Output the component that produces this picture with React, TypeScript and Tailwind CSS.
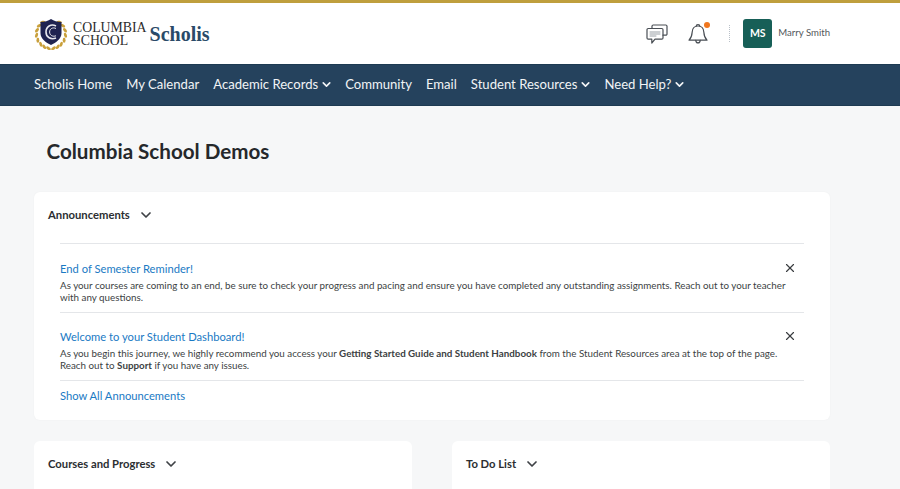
import { ChevronDown, X } from "lucide-react";

const navItems = [
  { label: "Scholis Home" },
  { label: "My Calendar" },
  { label: "Academic Records", menu: true },
  { label: "Community" },
  { label: "Email" },
  { label: "Student Resources", menu: true },
  { label: "Need Help?", menu: true },
];

function Crest() {
  // laurel leaves run round the shield, from the top corners down to the base
  const angles = [35, 55, 75, 95, 115, 135, 152, 170];
  return (
    <svg width="34" height="32" viewBox="0 0 34 32" className="shrink-0">
      {angles.map((t) => {
        const r = (t * Math.PI) / 180;
        const x = 17 - Math.sin(r) * 14.5;
        const y = 16 - Math.cos(r) * 14.5;
        return (
          <g key={t} fill="#c9a03c">
            <ellipse cx={x} cy={y} rx="2.6" ry="1.4" transform={`rotate(${-t + 25} ${x} ${y})`} />
            <ellipse cx={34 - x} cy={y} rx="2.6" ry="1.4" transform={`rotate(${t - 25} ${34 - x} ${y})`} />
          </g>
        );
      })}
      <path d="M6.5 4 C11 4 14 3 17 1 C20 3 23 4 27.5 4 L27.5 15 C27.5 21 22 24.5 17 27 C12 24.5 6.5 21 6.5 15 Z" fill="#1f2350" />
      <path d="M22 8 C17 5.5 12 8.5 12 14 C12 19.5 17 22 22 20" fill="none" stroke="#e8e8ee" strokeWidth="1.6" />
      <path d="M22 10.5 C19 9 15.6 10.5 15.6 14 C15.6 17.5 19 19 22 17.8" fill="none" stroke="#e8e8ee" strokeWidth="1" />
    </svg>
  );
}

function ChatIcon() {
  return (
    <svg width="22" height="22" viewBox="0 0 22 22" fill="none" stroke="#4a4f55" strokeWidth="1.2" strokeLinejoin="round" strokeLinecap="round">
      <path d="M6 5 V3 a1.2 1.2 0 0 1 1.2 -1 H19.8 A1.2 1.2 0 0 1 21 3 V11 a1.2 1.2 0 0 1 -1.2 1.2 H17" />
      <path d="M2.2 5.5 H15.8 A1.2 1.2 0 0 1 17 6.7 V15 a1.2 1.2 0 0 1 -1.2 1.2 H9 L5.8 20 V16.2 H2.2 A1.2 1.2 0 0 1 1 15 V6.7 A1.2 1.2 0 0 1 2.2 5.5 Z" />
      <path d="M4 9 H14 M4 11 H14 M4 13 H10" stroke="#9aa0a6" strokeWidth="1" />
    </svg>
  );
}

function BellIcon() {
  return (
    <span className="relative block h-[22px] w-[20px]">
      <svg width="20" height="22" viewBox="0 0 20 22" fill="none" stroke="#4a4f55" strokeWidth="1.2" strokeLinejoin="round" strokeLinecap="round">
        <path d="M10 3 C6 3 4.4 5.8 4.2 9 C4 12.5 3.2 15 1 17.2 H19 C16.8 15 16 12.5 15.8 9 C15.6 5.8 14 3 10 3 Z" />
        <path d="M8.2 3.2 C8.2 1.2 11.8 1.2 11.8 3.2" />
        <path d="M7.8 17.4 C8 20.8 12 20.8 12.2 17.4" />
      </svg>
      <span className="absolute -top-[1px] -right-[2px] h-[6px] w-[6px] rounded-full bg-[#f0761d]" />
    </span>
  );
}

function Announcement({ title, children }: { title: string; children: React.ReactNode }) {
  return (
    <div className="relative border-b border-[#e4e6e9] pt-[16px] pb-[9px]">
      <a className="block text-[11.2px] leading-[16px] text-[#1a7ac4]">{title}</a>
      <p className="mt-[2px] pr-[10px] text-[9.8px] leading-[12px] text-[#3c3f43]">{children}</p>
      <X size={14} strokeWidth={2} className="absolute top-[16px] right-[7px] text-[#3a3d41]" />
    </div>
  );
}

function WidgetHead({ title }: { title: string }) {
  return (
    <div className="flex items-center">
      <h2 className="text-[11.25px] leading-[16px] font-bold text-[#2b2e31]">{title}</h2>
      <ChevronDown size={16} strokeWidth={2.6} className="ml-[8px] text-[#3f4246]" />
    </div>
  );
}

export default function App() {
  return (
    <div className="h-[489px] overflow-hidden bg-[#f6f7f8] font-['Lato',sans-serif]">
      <div className="h-[3px] bg-[#bf9f3d]" />
      <header className="flex h-[61px] items-center bg-white pr-[70px] pl-[34px]">
        <Crest />
        <div className="ml-[5px] font-['Liberation_Serif',serif] text-[13.8px] leading-[13px] text-[#2c2c2c]">
          <div>COLUMBIA</div>
          <div>SCHOOL</div>
        </div>
        <span className="ml-[3px] font-['Liberation_Serif',serif] text-[20px] leading-none font-bold text-[#2a4a68]">Scholis</span>
        <div className="ml-auto flex items-center">
          <ChatIcon />
          <span className="ml-[20px]"><BellIcon /></span>
          <span className="ml-[21px] h-[17px] border-l border-dotted border-[#b9c0c8]" />
          <span className="ml-[13px] flex h-[29px] w-[29px] items-center justify-center rounded-[3px] bg-[#175f57] text-[10.5px] font-bold text-white">MS</span>
          <span className="ml-[6px] text-[9.6px] text-[#53575b]">Marry Smith</span>
        </div>
      </header>
      <nav className="flex h-[42px] items-center gap-[14px] border-y border-[#1d3a52] bg-[#25425d] pb-[1px] pl-[34px] text-[13.1px] text-[#f2f4f6]">
        {navItems.map((item) => (
          <span key={item.label} className="flex items-center">
            {item.label}
            {item.menu && <ChevronDown size={13} strokeWidth={3} className="-mr-[2px] ml-[2px]" />}
          </span>
        ))}
      </nav>
      <main className="pt-[32px] pr-[70px] pl-[34px]">
        <h1 className="pl-[12.5px] text-[20.6px] leading-[26px] font-bold text-[#25282b]">Columbia School Demos</h1>
        <section className="mt-[28px] h-[228px] rounded-[6px] bg-white pt-[15px] pr-[26px] pl-[14px] shadow-[0_0_2px_rgba(0,0,0,0.04)]">
          <WidgetHead title="Announcements" />
          <div className="mt-[20px] ml-[12px] border-t border-[#e4e6e9] pt-[1px]">
            <Announcement title="End of Semester Reminder!">
              As your courses are coming to an end, be sure to check your progress and pacing and ensure you have completed any outstanding assignments. Reach out to your teacher with any questions.
            </Announcement>
            <Announcement title="Welcome to your Student Dashboard!">
              As you begin this journey, we highly recommend you access your <b>Getting Started Guide and Student Handbook</b> from the Student Resources area at the top of the page. Reach out to <b>Support</b> if you have any issues.
            </Announcement>
            <a className="mt-[7px] block text-[11.2px] leading-[15px] text-[#1a7ac4]">Show All Announcements</a>
          </div>
        </section>
        <div className="mt-[21px] grid grid-cols-[378px_378px] gap-[40px]">
          <section className="h-[60px] rounded-[6px] bg-white pt-[15px] pl-[14px]">
            <WidgetHead title="Courses and Progress" />
          </section>
          <section className="h-[60px] rounded-[6px] bg-white pt-[15px] pl-[14px]">
            <WidgetHead title="To Do List" />
          </section>
        </div>
      </main>
    </div>
  );
}
